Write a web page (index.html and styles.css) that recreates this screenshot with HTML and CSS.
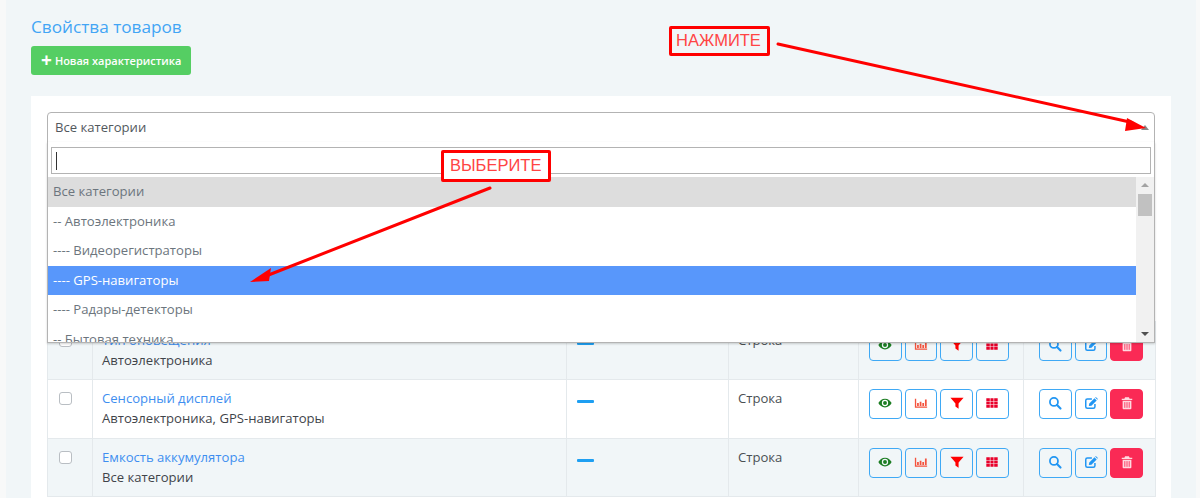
FILE: index.html
```html
<!DOCTYPE html>
<html lang="ru">
<head>
<meta charset="utf-8">
<title>Свойства товаров</title>
<link rel="stylesheet" href="styles.css">
</head>
<body>
<svg width="0" height="0" class="defs">
  <symbol id="i-eye" viewBox="0 0 16 16"><path fill="#1c7d23" d="M8 3C4.600 3 1.800 5.200.4 8c1.400 2.800 4.200 5 7.600 5s6.200-2.200 7.600-5C14.200 5.200 11.400 3 8 3zm0 8.600A3.600 3.600 0 1 1 8 4.400a3.600 3.600 0 0 1 0 7.200z"/><circle fill="#1c7d23" cx="8" cy="8" r="2.200"/></symbol>
  <symbol id="i-chart" viewBox="0 0 16 16"><path fill="#f4533d" d="M1 3h1.500v9H15v1.500H1z"/><path fill="#f4533d" d="M3.500 8h2v3.500h-2zM6.500 6.500h2v5h-2zM9.500 8h2v3.500h-2zM12.500 4h2v7.500h-2z"/></symbol>
  <symbol id="i-filter" viewBox="0 0 16 16"><path fill="#f00" d="M.5 2h15L9.800 8.500v6L6.200 12V8.500z"/></symbol>
  <symbol id="i-grid" viewBox="0 0 16 16"><path fill="#e8002a" d="M1.500 2.500h4v3.200h-4zM6.200 2.500h3.600v3.200H6.200zM10.500 2.500h4v3.200h-4zM1.500 6.400h4v3.200h-4zM6.200 6.400h3.600v3.200H6.200zM10.500 6.400h4v3.200h-4zM1.500 10.300h4v3.200h-4zM6.200 10.300h3.600v3.200H6.200zM10.500 10.300h4v3.200h-4z"/></symbol>
  <symbol id="i-search" viewBox="0 0 16 16"><circle cx="6.800" cy="6.800" r="4.600" fill="none" stroke="#2196f3" stroke-width="2"/><path d="M10.300 10.300l4 4" stroke="#2196f3" stroke-width="2.400" stroke-linecap="round"/></symbol>
  <symbol id="i-edit" viewBox="0 0 16 16"><path fill="none" stroke="#2196f3" stroke-width="1.700" d="M12.500 9v3.200a1.800 1.800 0 0 1-1.800 1.800H3.800A1.800 1.800 0 0 1 2 12.200V5.300a1.800 1.800 0 0 1 1.800-1.800H9"/><path fill="#2196f3" d="M6 8.500l6-6 2.500 2.500-6 6L5.500 11.500zM12.800 1.800l.7-.7 2.400 2.400-.7.7z"/></symbol>
  <symbol id="i-trash" viewBox="0 0 16 16"><path fill="#ffd9e0" d="M5.800 1.500h4.400l.8 1.500H14v1.500H2V3h3zM3 5.500h10V14a1 1 0 0 1-1 1H4a1 1 0 0 1-1-1z"/><path stroke="#fa2a55" d="M5.500 7v6.500M8 7v6.500M10.500 7v6.500"/></symbol>
</svg>

<main class="page">
  <h1 class="title">Свойства товаров</h1>
  <button class="add-btn"><span class="plus">+</span>Новая характеристика</button>

  <section class="card">
    <div class="select-head">
      <span>Все категории</span>
      <i class="caret-up"></i>
    </div>

    <div class="dropdown">
      <div class="search-wrap"><div class="search"><i class="text-cursor"></i></div></div>
      <div class="list-wrap">
        <ul class="options">
          <li class="opt opt-current">Все категории</li>
          <li class="opt">-- Автоэлектроника</li>
          <li class="opt">---- Видеорегистраторы</li>
          <li class="opt opt-active">---- GPS-навигаторы</li>
          <li class="opt">---- Радары-детекторы</li>
          <li class="opt">-- Бытовая техника</li>
        </ul>
        <div class="scrollbar">
          <i class="sb-up"></i>
          <i class="sb-thumb"></i>
          <i class="sb-down"></i>
        </div>
      </div>
    </div>

    <table class="props">
      <tr class="row row-odd">
        <td class="c-check"><i class="check"></i></td>
        <td class="c-name"><a class="name">Тип оповещения</a><div class="cats">Автоэлектроника</div></td>
        <td class="c-dash"><i class="dash"></i></td>
        <td class="c-type">Строка</td>
        <td class="c-flags">
          <div class="btns"><button class="ib"><svg><use href="#i-eye"/></svg></button><button class="ib"><svg><use href="#i-chart"/></svg></button><button class="ib"><svg><use href="#i-filter"/></svg></button><button class="ib"><svg><use href="#i-grid"/></svg></button></div>
        </td>
        <td class="c-acts">
          <div class="btns"><button class="ib"><svg><use href="#i-search"/></svg></button><button class="ib"><svg><use href="#i-edit"/></svg></button><button class="ib ib-del"><svg><use href="#i-trash"/></svg></button></div>
        </td>
      </tr>
      <tr class="row">
        <td class="c-check"><i class="check"></i></td>
        <td class="c-name"><a class="name">Сенсорный дисплей</a><div class="cats">Автоэлектроника, GPS-навигаторы</div></td>
        <td class="c-dash"><i class="dash"></i></td>
        <td class="c-type">Строка</td>
        <td class="c-flags">
          <div class="btns"><button class="ib"><svg><use href="#i-eye"/></svg></button><button class="ib"><svg><use href="#i-chart"/></svg></button><button class="ib"><svg><use href="#i-filter"/></svg></button><button class="ib"><svg><use href="#i-grid"/></svg></button></div>
        </td>
        <td class="c-acts">
          <div class="btns"><button class="ib"><svg><use href="#i-search"/></svg></button><button class="ib"><svg><use href="#i-edit"/></svg></button><button class="ib ib-del"><svg><use href="#i-trash"/></svg></button></div>
        </td>
      </tr>
      <tr class="row row-odd">
        <td class="c-check"><i class="check"></i></td>
        <td class="c-name"><a class="name">Емкость аккумулятора</a><div class="cats">Все категории</div></td>
        <td class="c-dash"><i class="dash"></i></td>
        <td class="c-type">Строка</td>
        <td class="c-flags">
          <div class="btns"><button class="ib"><svg><use href="#i-eye"/></svg></button><button class="ib"><svg><use href="#i-chart"/></svg></button><button class="ib"><svg><use href="#i-filter"/></svg></button><button class="ib"><svg><use href="#i-grid"/></svg></button></div>
        </td>
        <td class="c-acts">
          <div class="btns"><button class="ib"><svg><use href="#i-search"/></svg></button><button class="ib"><svg><use href="#i-edit"/></svg></button><button class="ib ib-del"><svg><use href="#i-trash"/></svg></button></div>
        </td>
      </tr>
    </table>
  </section>
</main>

<div class="note note-press">НАЖМИТЕ</div>
<div class="note note-choose">ВЫБЕРИТЕ</div>
<svg class="arrows" width="1200" height="498" viewBox="0 0 1200 498">
  <path d="M778 44L1132 122.500" stroke="#f00" stroke-width="3" stroke-linecap="round"/>
  <path d="M1146 128L1127 118L1125 131z" fill="#f00"/>
  <path d="M490 188L266 276" stroke="#f00" stroke-width="3" stroke-linecap="round"/>
  <path d="M250 282L271 268L269 281z" fill="#f00"/>
</svg>
</body>
</html>
```
FILE: styles.css
```css
* { box-sizing: border-box; }
html, body { margin: 0; padding: 0; height: 498px; overflow: hidden; }
body {
  background: #f8f9f9;
  font-family: "Open Sans", "Liberation Sans", sans-serif;
  font-size: 13.100px;
  color: #3f4a52;
  position: relative;
}
.defs { position: absolute; }
.page {
  margin: 0 4px 0 6px;
  height: 498px;
  background: #f1f6f8;
  padding: 15px 25px 0;
  overflow: hidden;
}
.title {
  margin: 0;
  font-size: 17.200px;
  line-height: 23px;
  font-weight: 400;
  color: #42a5f5;
}
.add-btn {
  display: flex;
  align-items: center;
  margin-top: 8px;
  width: 160px;
  height: 29px;
  padding: 0 0 0 10px;
  border: 0;
  border-radius: 3px;
  background: #55ce63;
  color: #fff;
  font: 600 11px "Open Sans", sans-serif;
}
.plus { font-size: 19px; line-height: 17px; font-weight: 700; margin-right: 3px; }
.card {
  position: relative;
  margin: 21px 0 0 0;
  width: 1140px;
  height: 500px;
  background: #fff;
  padding: 16px 16px 0;
}
.select-head {
  display: flex;
  align-items: center;
  justify-content: space-between;
  height: 31px;
  padding: 0 5px 1px 7px;
  background: #fff;
  border: 1px solid #b3b3b3;
  border-radius: 4px 4px 0 0;
  color: #52585d;
  position: relative;
  z-index: 2;
}
.caret-up {
  width: 0; height: 0;
  border-left: 4px solid transparent;
  border-right: 4px solid transparent;
  border-bottom: 5px solid #888;
}
.dropdown {
  position: absolute;
  z-index: 2;
  top: 46px;
  left: 16px;
  width: 1108px;
  height: 201px;
  background: #fff;
  border: 1px solid #b3b3b3;
  border-top: 0;
  box-shadow: 0 1px 2px rgba(0,0,0,.18);
  overflow: hidden;
}
.search-wrap { padding: 5px 3px 2px; height: 35px; }
.search {
  height: 27px;
  border: 1px solid #b3b3b3;
  padding: 4px 3px;
}
.text-cursor { display: block; width: 1px; height: 18px; background: #333; margin-left: 1px; }
.list-wrap { display: flex; height: 165px; }
.options { flex: 1; margin: 0; padding: 0; list-style: none; overflow: hidden; }
.opt {
  height: 29.600px;
  line-height: 29.600px;
  padding-left: 5px;
  color: #6c757d;
  white-space: nowrap;
}
.opt-current { background: #ddd; }
.opt-active { background: #5897fb; color: #fff; }
.scrollbar {
  position: relative;
  width: 18px;
  background: #f1f1f1;
}
.sb-thumb {
  position: absolute;
  top: 17px; left: 2px;
  width: 14px; height: 22px;
  background: #c1c1c1;
}
.sb-up, .sb-down {
  position: absolute;
  left: 5px;
  width: 0; height: 0;
  border-left: 4px solid transparent;
  border-right: 4px solid transparent;
}
.sb-up { top: 6px; border-bottom: 4px solid #a3a3a3; }
.sb-down { bottom: 6px; border-top: 4px solid #505050; }
.props {
  margin-top: 177.500px;
  width: 1108px;
  border-collapse: collapse;
  table-layout: fixed;
}
.row { height: 58.500px; }
.row-odd { background: #f1f6f8; }
.row td { border: 1px solid #e4e9ec; vertical-align: top; padding: 8px 10px 0; }
.c-check { width: 45px; }
.c-name { width: 474px; }
.c-dash { width: 162px; }
.c-type { width: 130px; }
.c-flags { width: 165px; }
.c-acts { width: 132px; }
.row td.c-name { padding-left: 9px; }
.row td.c-type { padding-left: 9px; }
.row td.c-flags { padding-left: 10px; padding-right: 0; padding-top: 9px; }
.row td.c-acts { padding-left: 15px; padding-right: 0; padding-top: 9px; }
.check {
  display: block;
  width: 13px; height: 13px;
  margin: 4px 0 0 1px;
  background: #fff;
  border: 1px solid #b9bec3;
  border-radius: 3px;
}
.name { display: block; color: #3e8ef0; line-height: 21px; }
.cats { color: #3f444a; line-height: 19px; }
.dash { display: block; width: 17px; height: 3px; margin-top: 12px; background: #1e9ff2; border-radius: 1px; }
.c-type { color: #4a4f54; line-height: 21px; }
.btns { display: flex; gap: 3px; }
.ib {
  display: flex;
  align-items: center;
  justify-content: center;
  width: 32.700px;
  height: 30px;
  padding: 0 0 2px;
  background: transparent;
  border: 1px solid #3fa9f5;
  border-radius: 4px;
}
.ib svg { width: 14px; height: 14px; display: block; }
.ib-del { background: #fa2a55; border-color: #fa2a55; }
.note {
  position: absolute;
  border: 3px solid #f00;
  border-radius: 2px;
  color: #f44;
  font-family: "Liberation Sans", Arial, sans-serif;
  font-size: 16.500px;
  line-height: 23px;
  z-index: 5;
  white-space: nowrap;
}
.note-press { left: 669px; top: 26px; width: 101px; height: 30px; padding-left: 4px; background: #f1f6f8; }
.note-choose { left: 441px; top: 150px; width: 110px; height: 32px; padding: 1px 0 0 6px; background: #fff; }
.arrows { position: absolute; left: 0; top: 0; z-index: 4; pointer-events: none; }
```
